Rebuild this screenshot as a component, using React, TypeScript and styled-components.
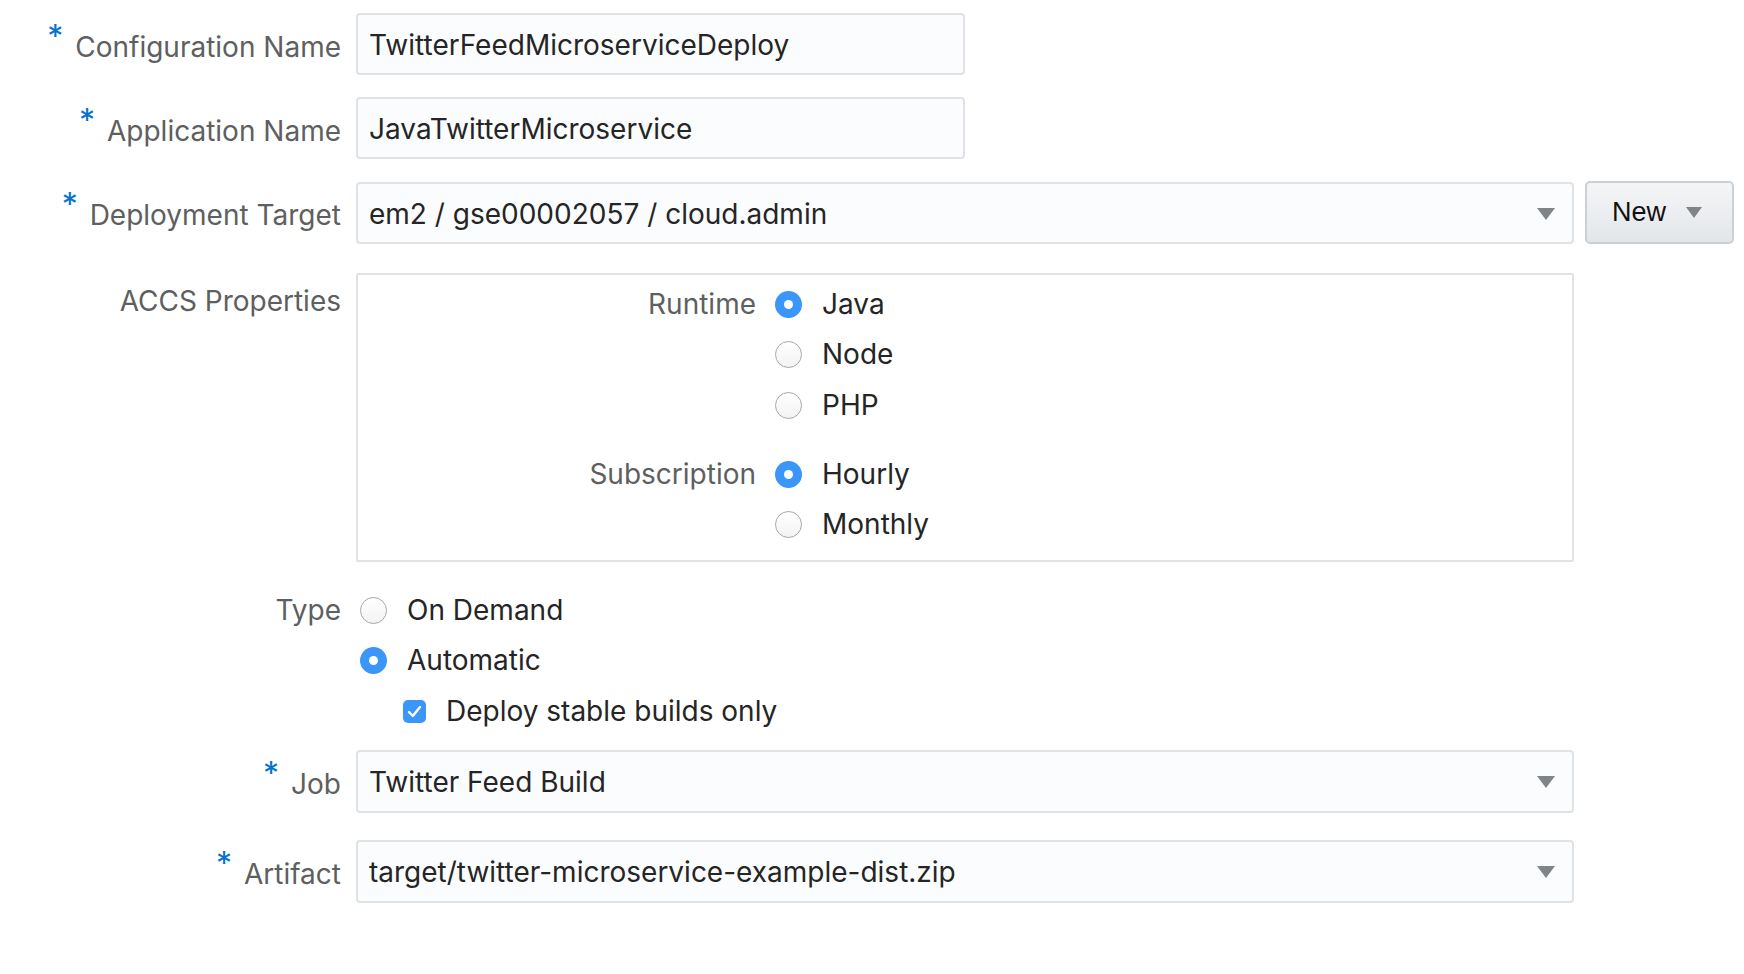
import React from "react";
import styled, { createGlobalStyle } from "styled-components";

const GlobalStyle = createGlobalStyle`
  html, body { margin: 0; padding: 0; background: #ffffff; }
  body { font-family: Inter, "Noto Sans", "Liberation Sans", sans-serif; }
  * { box-sizing: border-box; }
`;

const Form = styled.div`
  display: flex;
  flex-direction: column;
  padding-top: 13px;
  width: 1744px;
`;

const Row = styled.div<{ $mt?: number; $top?: boolean }>`
  display: flex;
  align-items: ${(p) => (p.$top ? "flex-start" : "center")};
  margin-top: ${(p) => p.$mt ?? 0}px;
`;

const Label = styled.div<{ $pt?: number; $lift?: boolean }>`
  width: 341px;
  flex: none;
  text-align: right;
  color: #5e5f60;
  font-size: 28px;
  line-height: 27px;
  white-space: nowrap;
  padding-top: ${(p) => p.$pt ?? 0}px;
  margin-bottom: ${(p) => (p.$lift ? 5 : 0)}px;
`;

const Required = styled.span`
  color: #0572ce;
  font-size: 32px;
  vertical-align: 9px;
  margin-right: 12px;
`;

const Field = styled.div<{ $wide?: boolean; $h?: number }>`
  margin-left: 15px;
  width: ${(p) => (p.$wide ? 1218 : 609)}px;
  height: ${(p) => p.$h ?? 62}px;
  border: 2px solid #dfe3e6;
  border-radius: 4px;
  background: #fbfcfd;
  padding: 2px 17px 0 11px;
  display: flex;
  align-items: center;
  justify-content: space-between;
  color: #252525;
  font-size: 28px;
  white-space: nowrap;
`;

const Caret = styled.span<{ $small?: boolean }>`
  width: 0;
  height: 0;
  flex: none;
  border-left: ${(p) => (p.$small ? 8 : 9)}px solid transparent;
  border-right: ${(p) => (p.$small ? 8 : 9)}px solid transparent;
  border-top: ${(p) => (p.$small ? 11 : 12)}px solid #808487;
`;

const NewButton = styled.div`
  margin-left: 11px;
  width: 149px;
  height: 63px;
  border: 2px solid #c9d0d6;
  border-radius: 5px;
  background: linear-gradient(#f4f5f7, #e3e6e9);
  display: flex;
  align-items: center;
  gap: 20px;
  padding-left: 25px;
  font-family: "Liberation Sans", Arial, sans-serif;
  font-size: 27px;
  color: #111111;
`;

const PropBox = styled.div`
  margin-left: 15px;
  width: 1218px;
  height: 289px;
  border: 2px solid #dfe3e6;
  border-radius: 2px;
  background: #ffffff;
  padding: 15.5px 0 22.5px 0;
  display: grid;
  grid-template-columns: 398px auto;
  column-gap: 19px;
  row-gap: 42px;
  align-content: start;
`;

const GroupLabel = styled.div`
  text-align: right;
  color: #5e5f60;
  font-size: 28px;
  line-height: 27px;
  white-space: nowrap;
`;

const OptionList = styled.div<{ $ml?: number }>`
  display: flex;
  flex-direction: column;
  gap: 23.5px;
  margin-left: ${(p) => p.$ml ?? 0}px;
`;

const Option = styled.div<{ $indent?: number }>`
  display: flex;
  align-items: center;
  gap: 20px;
  padding-left: ${(p) => p.$indent ?? 0}px;
  color: #252525;
  font-size: 28px;
  line-height: 27px;
  white-space: nowrap;
`;

const Radio = styled.span<{ $on?: boolean }>`
  width: 27px;
  height: 27px;
  flex: none;
  border-radius: 50%;
  display: flex;
  align-items: center;
  justify-content: center;
  background: ${(p) => (p.$on ? "#3a96f8" : "linear-gradient(#ffffff, #f3f3f3)")};
  border: ${(p) => (p.$on ? "none" : "1.5px solid #a6a6a6")};
  &::after {
    content: "";
    width: 9px;
    height: 9px;
    border-radius: 50%;
    background: #ffffff;
    display: ${(p) => (p.$on ? "block" : "none")};
  }
`;

const CheckBox = styled.span`
  width: 23px;
  height: 23px;
  flex: none;
  border-radius: 5px;
  background: #3a96f8;
  display: flex;
  align-items: center;
  justify-content: center;
`;

const Check = () => (
  <svg width="15" height="13" viewBox="0 0 15 13" fill="none">
    <path d="M2 7.2 L5.8 11 L13 2" stroke="#ffffff" strokeWidth="2.4" strokeLinecap="round" strokeLinejoin="round" />
  </svg>
);

const Req = ({ children }: { children: React.ReactNode }) => (
  <>
    <Required>*</Required>
    {children}
  </>
);

export default function App() {
  return (
    <>
      <GlobalStyle />
      <Form>
        <Row>
          <Label $lift><Req>Configuration Name</Req></Label>
          <Field>TwitterFeedMicroserviceDeploy</Field>
        </Row>
        <Row $mt={22}>
          <Label $lift><Req>Application Name</Req></Label>
          <Field>JavaTwitterMicroservice</Field>
        </Row>
        <Row $mt={22}>
          <Label $lift><Req>Deployment Target</Req></Label>
          <Field $wide>
            em2 / gse00002057 / cloud.admin
            <Caret />
          </Field>
          <NewButton>
            New
            <Caret $small />
          </NewButton>
        </Row>
        <Row $mt={29} $top>
          <Label $pt={15}>ACCS Properties</Label>
          <PropBox>
            <GroupLabel>Runtime</GroupLabel>
            <OptionList>
              <Option><Radio $on />Java</Option>
              <Option><Radio />Node</Option>
              <Option><Radio />PHP</Option>
            </OptionList>
            <GroupLabel>Subscription</GroupLabel>
            <OptionList>
              <Option><Radio $on />Hourly</Option>
              <Option><Radio />Monthly</Option>
            </OptionList>
          </PropBox>
        </Row>
        <Row $mt={34.5} $top>
          <Label>Type</Label>
          <OptionList $ml={19}>
            <Option><Radio />On Demand</Option>
            <Option><Radio $on />Automatic</Option>
            <Option $indent={43}><CheckBox><Check /></CheckBox>Deploy stable builds only</Option>
          </OptionList>
        </Row>
        <Row $mt={25}>
          <Label $lift><Req>Job</Req></Label>
          <Field $wide $h={63}>
            Twitter Feed Build
            <Caret />
          </Field>
        </Row>
        <Row $mt={27}>
          <Label $lift><Req>Artifact</Req></Label>
          <Field $wide $h={63}>
            target/twitter-microservice-example-dist.zip
            <Caret />
          </Field>
        </Row>
      </Form>
    </>
  );
}
